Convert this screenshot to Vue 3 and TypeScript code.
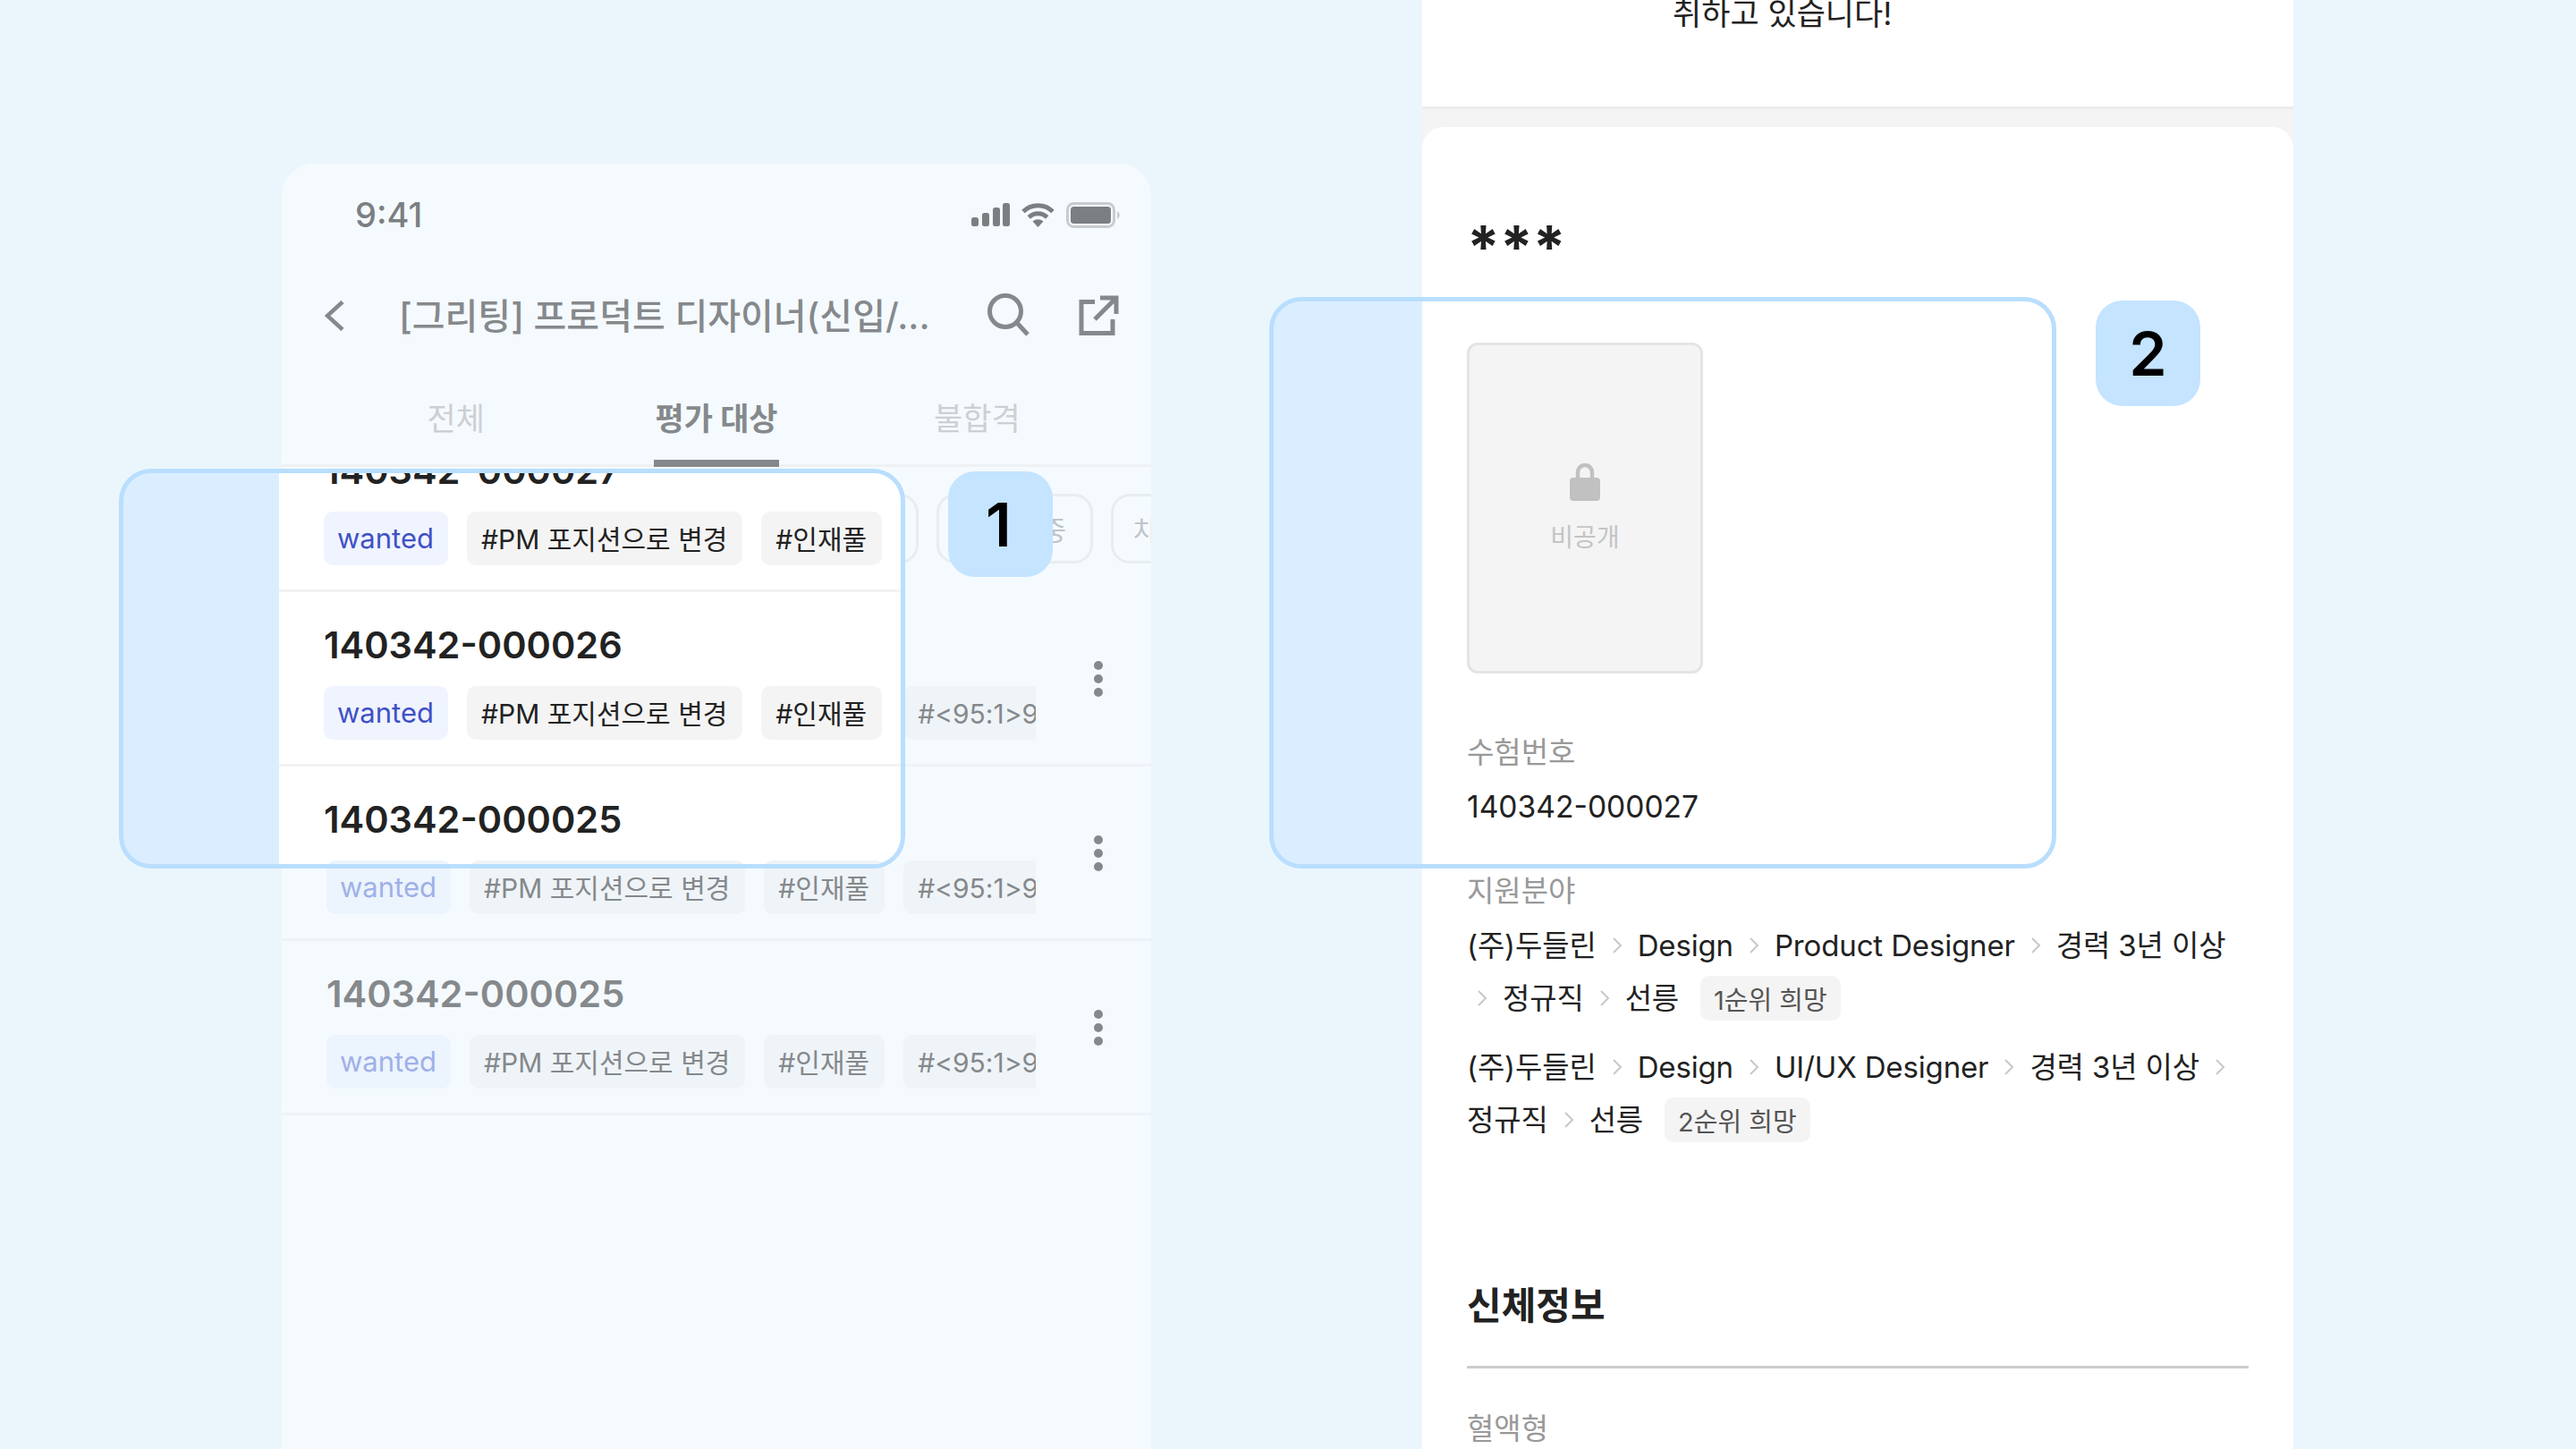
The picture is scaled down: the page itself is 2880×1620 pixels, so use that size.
<script setup lang="ts">
type Row = { id: string; faded?: boolean }

const filters = [
  { label: '전체', width: 180 },
  { label: '평가 중', width: 200 },
  { label: '평가 완료', width: 243 },
  { label: '미평가 중', width: 175 },
  { label: '차순위', width: 200 },
]

const tags = ['#PM 포지션으로 변경', '#인재풀']
const extraTag = '#<95:1>9급 공무원'

const backRows: string[] = ['140342-000026', '140342-000025', '140342-000025']
const frontRows: Row[] = [
  { id: '140342-000027' },
  { id: '140342-000026' },
  { id: '140342-000025', faded: true },
]

const applications = [
  { path: ['(주)두들린', 'Design', 'Product Designer', '경력 3년 이상', '정규직', '선릉'], rank: '1순위 희망' },
  { path: ['(주)두들린', 'Design', 'UI/UX Designer', '경력 3년 이상', '정규직', '선릉'], rank: '2순위 희망' },
]
</script>

<template>
  <div class="page">
    <section class="phone">
      <div class="status">
        <span class="time">9:41</span>
        <div class="status-icons">
          <svg width="43" height="26" viewBox="0 0 43 26">
            <rect x="0" y="16" width="8" height="10" rx="2.5" />
            <rect x="12" y="11" width="8" height="15" rx="2.5" />
            <rect x="24" y="5" width="8" height="21" rx="2.5" />
            <rect x="35" y="0" width="8" height="26" rx="2.5" />
          </svg>
          <svg width="39" height="28" viewBox="0 0 39 28">
            <path d="M3 10.5a23.5 23.5 0 0 1 33 0" fill="none" stroke="#7b7f82" stroke-width="5" />
            <path d="M9.3 17a14.5 14.5 0 0 1 20.4 0" fill="none" stroke="#7b7f82" stroke-width="5" />
            <path d="M13.5 21.5a9 9 0 0 1 12 0L19.5 28z" />
          </svg>
          <svg width="61" height="29" viewBox="0 0 61 29">
            <rect x="1.5" y="1.5" width="52" height="26" rx="7" fill="none" stroke="#c8ccce" stroke-width="3" />
            <rect x="5" y="5" width="45" height="19" rx="3.5" />
            <path d="M57 10a5 5 0 0 1 0 9z" fill="#c8ccce" />
          </svg>
        </div>
      </div>

      <div class="nav">
        <svg class="back" width="22" height="34" viewBox="0 0 22 34">
          <path d="M20 1.5 3 17l17 15.5" />
        </svg>
        <span class="nav-title">[그리팅] 프로덕트 디자이너(신입/...</span>
        <svg class="search" width="50" height="50" viewBox="0 0 50 50">
          <circle cx="20" cy="20" r="17.5" />
          <path d="M32.5 32.5 45 46" />
        </svg>
        <svg class="share" width="46" height="46" viewBox="0 0 46 46">
          <path d="M19 7.5H4v35h35V27" />
          <path d="M19 27 43 3M25 3h18v18" />
        </svg>
      </div>

      <div class="tabs">
        <div class="tab"><span>전체</span></div>
        <div class="tab active"><span>평가 대상</span></div>
        <div class="tab"><span>불합격</span></div>
      </div>

      <div class="filters">
        <span v-for="f in filters" :key="f.label" class="filter" :style="{ width: f.width + 'px' }">{{ f.label }}</span>
      </div>

      <div v-for="(id, i) in backRows" :key="i" class="row dim">
        <div class="row-body">
          <div class="row-id">{{ id }}</div>
          <div class="row-tags">
            <span class="tag wanted">wanted</span>
            <span v-for="t in tags" :key="t" class="tag">{{ t }}</span>
            <span class="tag">{{ extraTag }}</span>
          </div>
        </div>
        <div class="kebab"><i></i><i></i><i></i></div>
      </div>

      <div class="focus focus-list">
        <div class="focus-panel">
          <div class="focus-rows">
            <div v-for="r in frontRows" :key="r.id" class="row" :class="{ 'row-faded': r.faded }">
              <div class="row-body">
                <div class="row-id">{{ r.id }}</div>
                <div class="row-tags">
                  <span class="tag wanted">wanted</span>
                  <span v-for="t in tags" :key="t" class="tag">{{ t }}</span>
                </div>
              </div>
            </div>
          </div>
        </div>
      </div>
      <div class="badge badge-list">1</div>
    </section>

    <section class="detail">
      <div class="intro">취하고 있습니다!</div>
      <div class="card">
        <div class="name">***</div>
        <div class="photo">
          <svg width="34" height="42" viewBox="0 0 34 42">
            <path d="M9 18V10a8 8 0 0 1 16 0v8" fill="none" stroke="#c1c1c1" stroke-width="4.5" />
            <rect x="0" y="16" width="34" height="26" rx="4" fill="#c1c1c1" />
          </svg>
          <span>비공개</span>
        </div>

        <div class="label exam-label">수험번호</div>
        <div class="value">140342-000027</div>

        <div class="label apply-label">지원분야</div>
        <div class="apply-list">
          <div v-for="a in applications" :key="a.rank" class="apply">
            <template v-for="(p, i) in a.path" :key="p">
              <span v-if="i > 0" class="chev">
                <svg width="12" height="20" viewBox="0 0 12 20"><path d="M2 2l8 8-8 8" /></svg>
              </span>
              <span class="crumb">{{ p }}</span>
            </template>
            <span class="rank">{{ a.rank }}</span>
          </div>
        </div>

        <h2 class="section-title">신체정보</h2>
        <div class="label blood-label">혈액형</div>
      </div>

      <div class="focus focus-photo"></div>
      <div class="badge badge-photo">2</div>
    </section>
  </div>
</template>

<style>
html,
body {
  margin: 0;
  background: #ebf6fc;
}
</style>

<style scoped>
.page {
  position: relative;
  display: flex;
  align-items: flex-start;
  gap: 303px;
  box-sizing: border-box;
  width: 2880px;
  height: 1620px;
  padding-left: 315px;
  overflow: hidden;
  background: #ebf6fc;
  font-family: Inter, "Noto Sans CJK KR", sans-serif;
  color: #222;
}

/* left: phone */
.phone {
  position: relative;
  flex: none;
  width: 972px;
  height: 1437px;
  margin-top: 183px;
  border-radius: 36px 36px 0 0;
  background: #f5fafe;
}

.status {
  display: flex;
  align-items: center;
  justify-content: space-between;
  height: 114px;
  padding: 0 34px 0 82px;
  box-sizing: border-box;
}
.time {
  font-size: 38px;
  font-weight: 500;
  color: #7b7f82;
}
.status-icons {
  display: flex;
  align-items: center;
  gap: 12px;
  fill: #7b7f82;
}

.nav {
  display: flex;
  align-items: center;
  height: 112px;
  padding-left: 48px;
  color: #85898c;
}
.nav svg {
  flex: none;
  fill: none;
  stroke: #85898c;
}
.back {
  stroke-width: 4.5;
}
.nav-title {
  flex: none;
  width: 606px;
  margin-left: 61px;
  padding-bottom: 5px;
  font-size: 40px;
  font-weight: 500;
  white-space: nowrap;
}
.search {
  margin-left: 52px;
  stroke-width: 5;
}
.share {
  margin-left: 51px;
  stroke-width: 5;
}

.tabs {
  display: flex;
  box-sizing: border-box;
  height: 113px;
  padding: 0 49px;
  border-bottom: 3px solid #eef2f5;
}
.tab {
  display: flex;
  flex: 1;
  justify-content: center;
  height: 113px;
  font-size: 35px;
  color: #ccd0d3;
}
.tab span {
  display: flex;
  align-items: center;
  box-sizing: border-box;
  height: 113px;
}
.tab.active span {
  padding: 7px 1px 0;
  border-bottom: 8px solid #85898c;
  font-weight: 700;
  color: #85898c;
}

.filters {
  display: flex;
  gap: 20px;
  box-sizing: border-box;
  height: 140px;
  padding: 30px 0 0 49px;
  overflow: hidden;
}
.filter {
  flex: none;
  display: flex;
  align-items: center;
  box-sizing: border-box;
  height: 78px;
  padding: 0 27px;
  justify-content: flex-end;
  border: 3px solid #e8edf0;
  border-radius: 21px;
  font-size: 30px;
  color: #bfc4c7;
  white-space: nowrap;
}
.filter:last-child {
  padding-left: 22px;
  justify-content: flex-start;
}

.row {
  display: flex;
  align-items: center;
  box-sizing: border-box;
  height: 195px;
  padding-left: 50px;
  border-bottom: 3px solid #f2f2f2;
}
.row-body {
  flex: none;
  width: 793px;
  overflow: hidden;
}
.row-id {
  height: 60px;
  margin-top: 29px;
  margin-bottom: 16px;
  font-size: 41.5px;
  font-weight: 600;
  line-height: 60px;
}
.row-tags {
  display: flex;
  gap: 21px;
  margin-bottom: 27px;
}
.tag {
  flex: none;
  display: flex;
  align-items: center;
  height: 60px;
  padding: 0 17px 2px 16px;
  box-sizing: border-box;
  border-radius: 10px;
  background: #f4f4f4;
  font-size: 30px;
  white-space: nowrap;
}
.tag.wanted {
  padding: 0 16px 2px 15px;
  background: #f0f4ff;
  font-size: 31px;
  color: #3f51c5;
}

.dim {
  border-bottom-color: #eef3f7;
}
.dim .row-id {
  color: #85898c;
}
.dim .tag,
.row-faded .tag {
  background: #eff4f8;
  color: #85898c;
}
.dim .tag.wanted,
.row-faded .tag.wanted {
  background: #ecf4fd;
  color: #9fb0e8;
}
.row-faded .row-tags {
  margin-left: 3px;
}
.kebab {
  display: flex;
  flex-direction: column;
  gap: 5px;
  margin-top: 2px;
  margin-left: 65px;
}
.kebab i {
  display: block;
  width: 10px;
  height: 10px;
  border-radius: 50%;
  background: #85898c;
}

/* highlight frames */
.focus {
  position: absolute;
  box-sizing: border-box;
  border: 5px solid #b9defe;
  border-radius: 36px;
  overflow: hidden;
}
.focus-list {
  left: -182px;
  top: 341px;
  width: 879px;
  height: 447px;
  padding-left: 174px;
  background: #dbeeff;
}
.focus-panel {
  height: 100%;
  background: #fff;
  overflow: hidden;
}
.focus-rows {
  margin-top: -62px;
}
.focus-panel .row-body {
  width: 700px;
}
.focus-photo {
  left: -171px;
  top: 332px;
  width: 880px;
  height: 639px;
  background: linear-gradient(to right, #dbeeff 166px, transparent 166px);
}
.badge {
  position: absolute;
  display: flex;
  align-items: center;
  justify-content: center;
  width: 117px;
  height: 118px;
  border-radius: 30px;
  background: #c4e4ff;
  font-size: 68px;
  font-weight: 600;
  color: #000;
}
.badge-list {
  left: 745px;
  top: 344px;
  padding-right: 4px;
  box-sizing: border-box;
}
.badge-photo {
  left: 753px;
  top: 336px;
}

/* right: applicant detail */
.detail {
  position: relative;
  flex: none;
  display: flex;
  flex-direction: column;
  width: 974px;
  height: 1620px;
  background: #f4f4f4;
}
.intro {
  box-sizing: border-box;
  height: 122px;
  padding-left: 280px;
  border-bottom: 3px solid #ececec;
  background: #fff;
  font-size: 35px;
  line-height: 30px;
}
.card {
  flex: 1;
  margin-top: 20px;
  padding: 0 50px;
  border-radius: 24px 24px 0 0;
  background: #fff;
  overflow: hidden;
}
.name {
  height: 80px;
  margin-top: 84px;
  margin-bottom: 77px;
  font-size: 66px;
  font-weight: 700;
  line-height: 100px;
}
.photo {
  display: flex;
  flex-direction: column;
  align-items: center;
  justify-content: center;
  gap: 19px;
  box-sizing: border-box;
  width: 264px;
  height: 370px;
  border: 3px solid #e4e4e4;
  border-radius: 12px;
  background: #f4f4f4;
  font-size: 28px;
  color: #c4c4c4;
}
.label {
  height: 46px;
  font-size: 33px;
  line-height: 46px;
  color: #999;
}
.exam-label {
  margin-top: 65px;
}
.value {
  height: 46px;
  margin-top: 15px;
  font-size: 33.6px;
  line-height: 46px;
}
.apply-label {
  margin-top: 48px;
}
.apply-list {
  display: flex;
  flex-direction: column;
  gap: 27px;
  margin-top: 13px;
}
.apply {
  display: flex;
  flex-wrap: wrap;
  align-items: center;
  gap: 9px 6px;
}
.crumb {
  height: 50px;
  font-size: 33px;
  letter-spacing: -0.15px;
  line-height: 50px;
  white-space: nowrap;
}
.chev {
  display: flex;
  align-items: center;
  justify-content: center;
  width: 34px;
  height: 50px;
}
.chev svg {
  fill: none;
  stroke: #c8c8c8;
  stroke-width: 2;
}
.rank {
  display: flex;
  align-items: center;
  height: 50px;
  margin-left: 18px;
  padding: 0 15px;
  border-radius: 10px;
  background: #f4f4f4;
  font-size: 29px;
  color: #555;
  white-space: nowrap;
}
.section-title {
  height: 60px;
  margin: 153px 0 0;
  padding-bottom: 37px;
  border-bottom: 3px solid #ccc;
  font-size: 42px;
  font-weight: 700;
  line-height: 60px;
}
.blood-label {
  margin-top: 44px;
}
</style>
